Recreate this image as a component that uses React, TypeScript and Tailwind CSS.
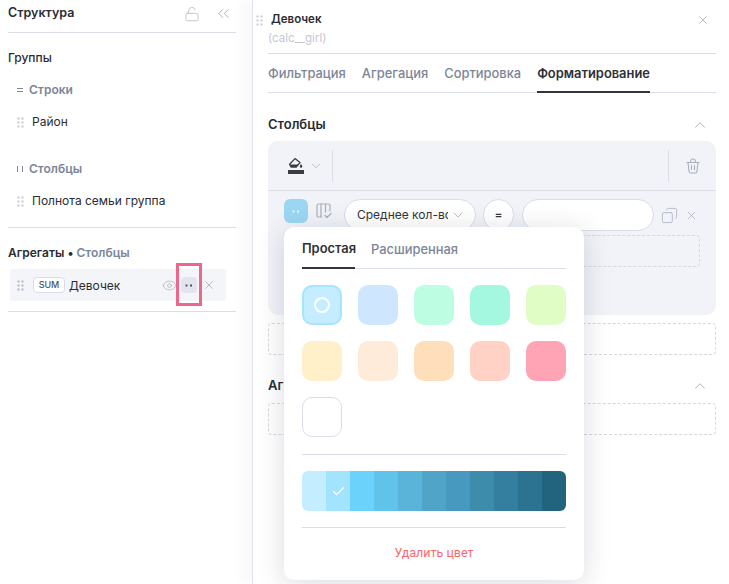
import React from "react";
import { X, ChevronUp, ChevronDown, ChevronsLeft, LockOpen, Eye, Copy, Check } from "lucide-react";

const Grip = ({ color = "#c3c8d3" }: { color?: string }) => (
  <svg width="7" height="11" viewBox="0 0 7 11" fill={color}>
    {[0, 4, 8].map((y) => (
      <g key={y}>
        <rect x="0.5" y={y + 0.5} width="2" height="2" />
        <rect x="4.5" y={y + 0.5} width="2" height="2" />
      </g>
    ))}
  </svg>
);

const Dots = ({ color }: { color: string }) => (
  <svg width="8" height="3" viewBox="0 0 8 3" fill={color}>
    <rect x="0.5" y="0.5" width="2" height="2" />
    <rect x="5" y="0.5" width="2" height="2" />
  </svg>
);

const Bucket = () => (
  <svg width="18" height="18" viewBox="0 0 18 18" fill="none">
    <path d="M8 1.6 L13 5.6 L9.2 10 H4 L2.6 7.2 Z" stroke="#3a3c44" strokeWidth="1.3" strokeLinejoin="round" />
    <path d="M3 7.4 H11.4 L9.2 10 H4 Z" fill="#3a3c44" />
    <path d="M14 7 C14.8 8.2 15.3 8.8 15.3 9.5 A1.2 1.2 0 0 1 12.8 9.5 C12.8 8.8 13.3 8.2 14 7 Z" fill="#3a3c44" />
    <rect x="1" y="13" width="16" height="4" fill="#3a3c44" />
  </svg>
);

const Trash = () => (
  <svg width="14" height="16" viewBox="0 0 14 16" fill="none" stroke="#a9afbe" strokeWidth="1.1" strokeLinecap="round">
    <path d="M1 4.5 H13" />
    <path d="M4.5 4.5 C4.5 2 5.5 1 7 1 C8.5 1 9.5 2 9.5 4.5" />
    <path d="M2 4.5 L3 13.2 C3.1 14.3 3.8 15 4.8 15 H9.2 C10.2 15 10.9 14.3 11 13.2 L12 4.5" />
    <path d="M5.5 7.5 V11.5 M8.5 7.5 V11.5" />
  </svg>
);

const ColsCheck = () => (
  <svg width="16" height="16" viewBox="0 0 16 16" fill="none" stroke="#a9afbe" strokeWidth="1.2" strokeLinecap="round" strokeLinejoin="round">
    <path d="M5 14 H2.5 C1.6 14 1 13.4 1 12.5 V2.5 C1 1.6 1.6 1 2.5 1 H12.5 C13.4 1 14 1.6 14 2.5 V8" />
    <path d="M5 1 V14 M9.5 1 V9" />
    <path d="M9 12.5 L11 14.5 L15 10.5" />
  </svg>
);

const swatches = [
  ["bg-[#c4edff]", "border-2 border-[#a5e5ff]"],
  ["bg-[#cfe6ff]", ""],
  ["bg-[#bdfde2]", ""],
  ["bg-[#a3f8df]", ""],
  ["bg-[#e1fdc6]", ""],
  ["bg-[#fff0c9]", ""],
  ["bg-[#ffebd9]", ""],
  ["bg-[#ffdfbb]", ""],
  ["bg-[#ffd2c5]", ""],
  ["bg-[#ffa4b5]", ""],
  ["bg-white", "border border-[#d8dde8]"],
];

const palette = [
  "bg-[#c4edff]",
  "bg-[#a2e3fd]",
  "bg-[#6bd2fb]",
  "bg-[#61c3ea]",
  "bg-[#5ab4d9]",
  "bg-[#50a4c7]",
  "bg-[#4799bf]",
  "bg-[#3e8cac]",
  "bg-[#347f9f]",
  "bg-[#2b7390]",
  "bg-[#22637e]",
];

function Popup() {
  return (
    <div className="absolute left-[16px] top-[36px] z-20 w-[300px] h-[353px] bg-white rounded-[10px] shadow-[0_4px_28px_rgba(30,35,60,0.16)] px-[18px]">
      <div className="flex h-[42px] gap-4 border-b border-[#d8dde8] text-[12.9px] font-semibold">
        <div className="h-[42px] w-[53px] flex items-end pb-[9px] border-b-2 border-[#33353c] text-[#2e3037] whitespace-nowrap">Простая</div>
        <div className="flex items-end pb-[9px] font-medium text-[#7c8698]">Расширенная</div>
      </div>
      <div className="grid grid-cols-5 gap-x-4 gap-y-4 mt-4">
        {swatches.map(([bg, extra], i) => (
          <div key={i} className={`w-10 h-10 rounded-[10px] flex items-center justify-center ${bg} ${extra}`}>
            {i === 0 && <div className="w-4 h-4 rounded-full border-2 border-white" />}
          </div>
        ))}
      </div>
      <div className="mt-[17px] border-t border-[#d8dde8]" />
      <div className="mt-4 flex h-10 rounded-[6px] overflow-hidden">
        {palette.map((c, i) => (
          <div key={i} className={`flex-1 flex items-center justify-center ${c}`}>
            {i === 1 && <Check size={15} color="#ffffff" strokeWidth={2} />}
          </div>
        ))}
      </div>
      <div className="mt-4 border-t border-[#d8dde8]" />
      <div className="mt-[15px] text-center text-[12.5px] leading-[20px] font-normal text-[#f56a6f] font-['Roboto',sans-serif]">Удалить цвет</div>
    </div>
  );
}

function RightPanel() {
  return (
    <div className="relative flex-1 h-full border-l border-[#dfe2e8] shadow-[-8px_0_14px_rgba(30,35,60,0.035)] bg-white pl-[15px] pr-[13px]">
      <div className="h-[54px] border-b border-[#d8dde8] pt-[10px]">
        <div className="flex items-center h-[20px]">
          <div className="-ml-3 mr-[8px] flex"><Grip color="#c8ccd6" /></div>
          <span className="text-[11.5px] font-semibold text-[#2a2c33]">Девочек</span>
          <X size={14} strokeWidth={1.4} color="#a9afbe" className="ml-auto mr-[6px]" />
        </div>
        <div className="text-[11.5px] leading-[14px] mt-[1px] text-[#c3c7d2]">(calc__girl)</div>
      </div>
      <div className="flex gap-4 h-[39px] border-b border-[#d8dde8] text-[12.9px] font-medium text-[#7c8698]">
        <div className="pt-[10px]">Фильтрация</div>
        <div className="pt-[10px]">Агрегация</div>
        <div className="pt-[10px]">Сортировка</div>
        <div className="pt-[10px] h-[39px] font-semibold border-b-2 border-[#33353c] text-[#2e3037]">Форматирование</div>
      </div>
      <div className="flex items-center justify-between h-[20px] mt-[22px] text-[13px] font-semibold text-[#2a2c33]">
        <span>Столбцы</span>
        <ChevronUp size={18} strokeWidth={1.3} color="#a9afbe" className="mr-[7px]" />
      </div>
      <div className="relative mt-[6px] h-[174px] rounded-[10px] bg-[#f1f3f8]">
        <div className="h-[50px] border-b border-[#d8dde8] flex items-center pl-[19px] pr-4">
          <Bucket />
          <ChevronDown size={14} strokeWidth={1.4} color="#a9afbe" className="ml-[4px]" />
          <div className="ml-[9px] h-8 border-l border-[#d8dde8]" />
          <div className="ml-auto h-8 border-l border-[#d8dde8]" />
          <div className="ml-[17px] flex"><Trash /></div>
        </div>
        <div className="relative">
          <div className="flex items-start pl-4 pt-2 gap-2">
            <div className="w-6 h-6 rounded-[6px] bg-[#9bd7f3] flex items-center justify-center"><Dots color="#e3f4fc" /></div>
            <div className="w-[16px] h-6 flex items-center justify-center"><ColsCheck /></div>
            <div className="ml-[4px] w-[132px] h-8 rounded-[16px] bg-white border border-[#d8dde8] flex items-center pl-3 pr-[9px] overflow-hidden">
              <span className="w-[91px] overflow-hidden whitespace-nowrap text-[12px] text-[#33353c]">Среднее кол-во</span>
              <ChevronDown size={16} strokeWidth={1.2} color="#a9afbe" className="ml-auto" />
            </div>
            <div className="-ml-[1px] w-[31px] h-8 rounded-[16px] bg-white border border-[#d8dde8] flex items-center justify-center text-[12px] font-medium text-[#33353c]">=</div>
            <div className="w-[132px] h-8 rounded-[16px] bg-white border border-[#d8dde8]" />
            <Copy size={17} strokeWidth={1.1} color="#a9afbe" className="mt-[8px] -ml-[1px] -scale-x-100" />
            <X size={13} strokeWidth={1.4} color="#a9afbe" className="mt-[10px] -ml-[1px]" />
          </div>
          <div className="mt-[4px] mx-4 h-8 rounded-[4px] border border-dashed border-[#d3d8e2]" />
          <Popup />
        </div>
      </div>
      <div className="mt-2 h-8 rounded-[4px] border border-dashed border-[#d3d8e2]" />
      <div className="flex items-center justify-between h-[20px] mt-[21px] text-[13px] font-semibold text-[#2a2c33]">
        <span>Агрегаты</span>
        <ChevronUp size={18} strokeWidth={1.3} color="#a9afbe" className="mr-[7px]" />
      </div>
      <div className="mt-[7px] h-8 rounded-[4px] border border-dashed border-[#d3d8e2]" />
    </div>
  );
}

function LeftPanel() {
  return (
    <div className="w-[252px] shrink-0 h-full pl-2 pr-4 text-[#2a2c33] relative">
      <div className="h-[33px] border-b border-[#d8dde8] flex items-center pb-[5px]">
        <span className="text-[12.5px] font-semibold">Структура</span>
        <LockOpen size={16} strokeWidth={1.2} color="#b4b9c6" className="ml-auto" />
        <ChevronsLeft size={19} strokeWidth={1.2} color="#a9afbe" className="ml-[14px] mr-[3px]" />
      </div>
      <div className="mt-[15px] text-[12px] leading-[20px] font-medium">Группы</div>
      <div className="mt-[12px] flex items-center h-5 text-[12px] font-semibold text-[#7c8698]">
        <span className="w-[21px] pl-[9px] flex"><span className="w-[6px] h-[4px] border-y border-[#7c8698]" /></span>
        Строки
      </div>
      <div className="mt-[12px] flex items-center h-5 text-[12px] font-normal">
        <span className="w-[24px] pl-[9px] flex"><Grip /></span>Район
      </div>
      <div className="mt-[27px] flex items-center h-5 text-[12px] font-semibold text-[#7c8698]">
        <span className="w-[21px] pl-[9px] flex"><span className="w-[6px] h-[6px] border-x border-[#7c8698]" /></span>
        Столбцы
      </div>
      <div className="mt-[12px] flex items-center h-5 text-[12px] font-normal">
        <span className="w-[24px] pl-[9px] flex"><Grip /></span>Полнота семьи группа
      </div>
      <div className="mt-[16px] border-t border-[#d8dde8]" />
      <div className="mt-[15px] h-5 flex items-center text-[12px] font-semibold">
        Агрегаты<span className="mx-[3px]">•</span><span className="text-[#7c8698]">Столбцы</span>
      </div>
      <div className="relative mt-[6px] ml-[2px] w-[216px] h-8 rounded-[2px] bg-[#f4f5f9] flex items-center pl-[7px]">
        <Grip color="#b4b9c6" />
        <span className="ml-[9px] w-[32px] h-[16px] rounded-[4px] bg-white border border-[#d8dde8] flex items-center justify-center text-[9px] font-medium text-[#50535c]">SUM</span>
        <span className="ml-1 pt-[1px] text-[12px]">Девочек</span>
        <Eye size={15} strokeWidth={1.2} color="#a9afbe" className="ml-auto" />
        <span className="ml-[4px] w-4 h-4 rounded-[4px] bg-[#e3e5ee] flex items-center justify-center"><Dots color="#50535c" /></span>
        <X size={14} strokeWidth={1.4} color="#a9afbe" className="ml-[5px] mr-[10px]" />
        <div className="absolute left-[166px] -top-[6px] w-[26px] h-[43px] border-[3px] border-[#f0658c]" />
      </div>
      <div className="mt-[10px] border-t border-[#d8dde8]" />
    </div>
  );
}

export default function App() {
  return (
    <div className="w-[729px] h-[584px] flex bg-white overflow-hidden font-['Inter',sans-serif]">
      <LeftPanel />
      <RightPanel />
    </div>
  );
}
